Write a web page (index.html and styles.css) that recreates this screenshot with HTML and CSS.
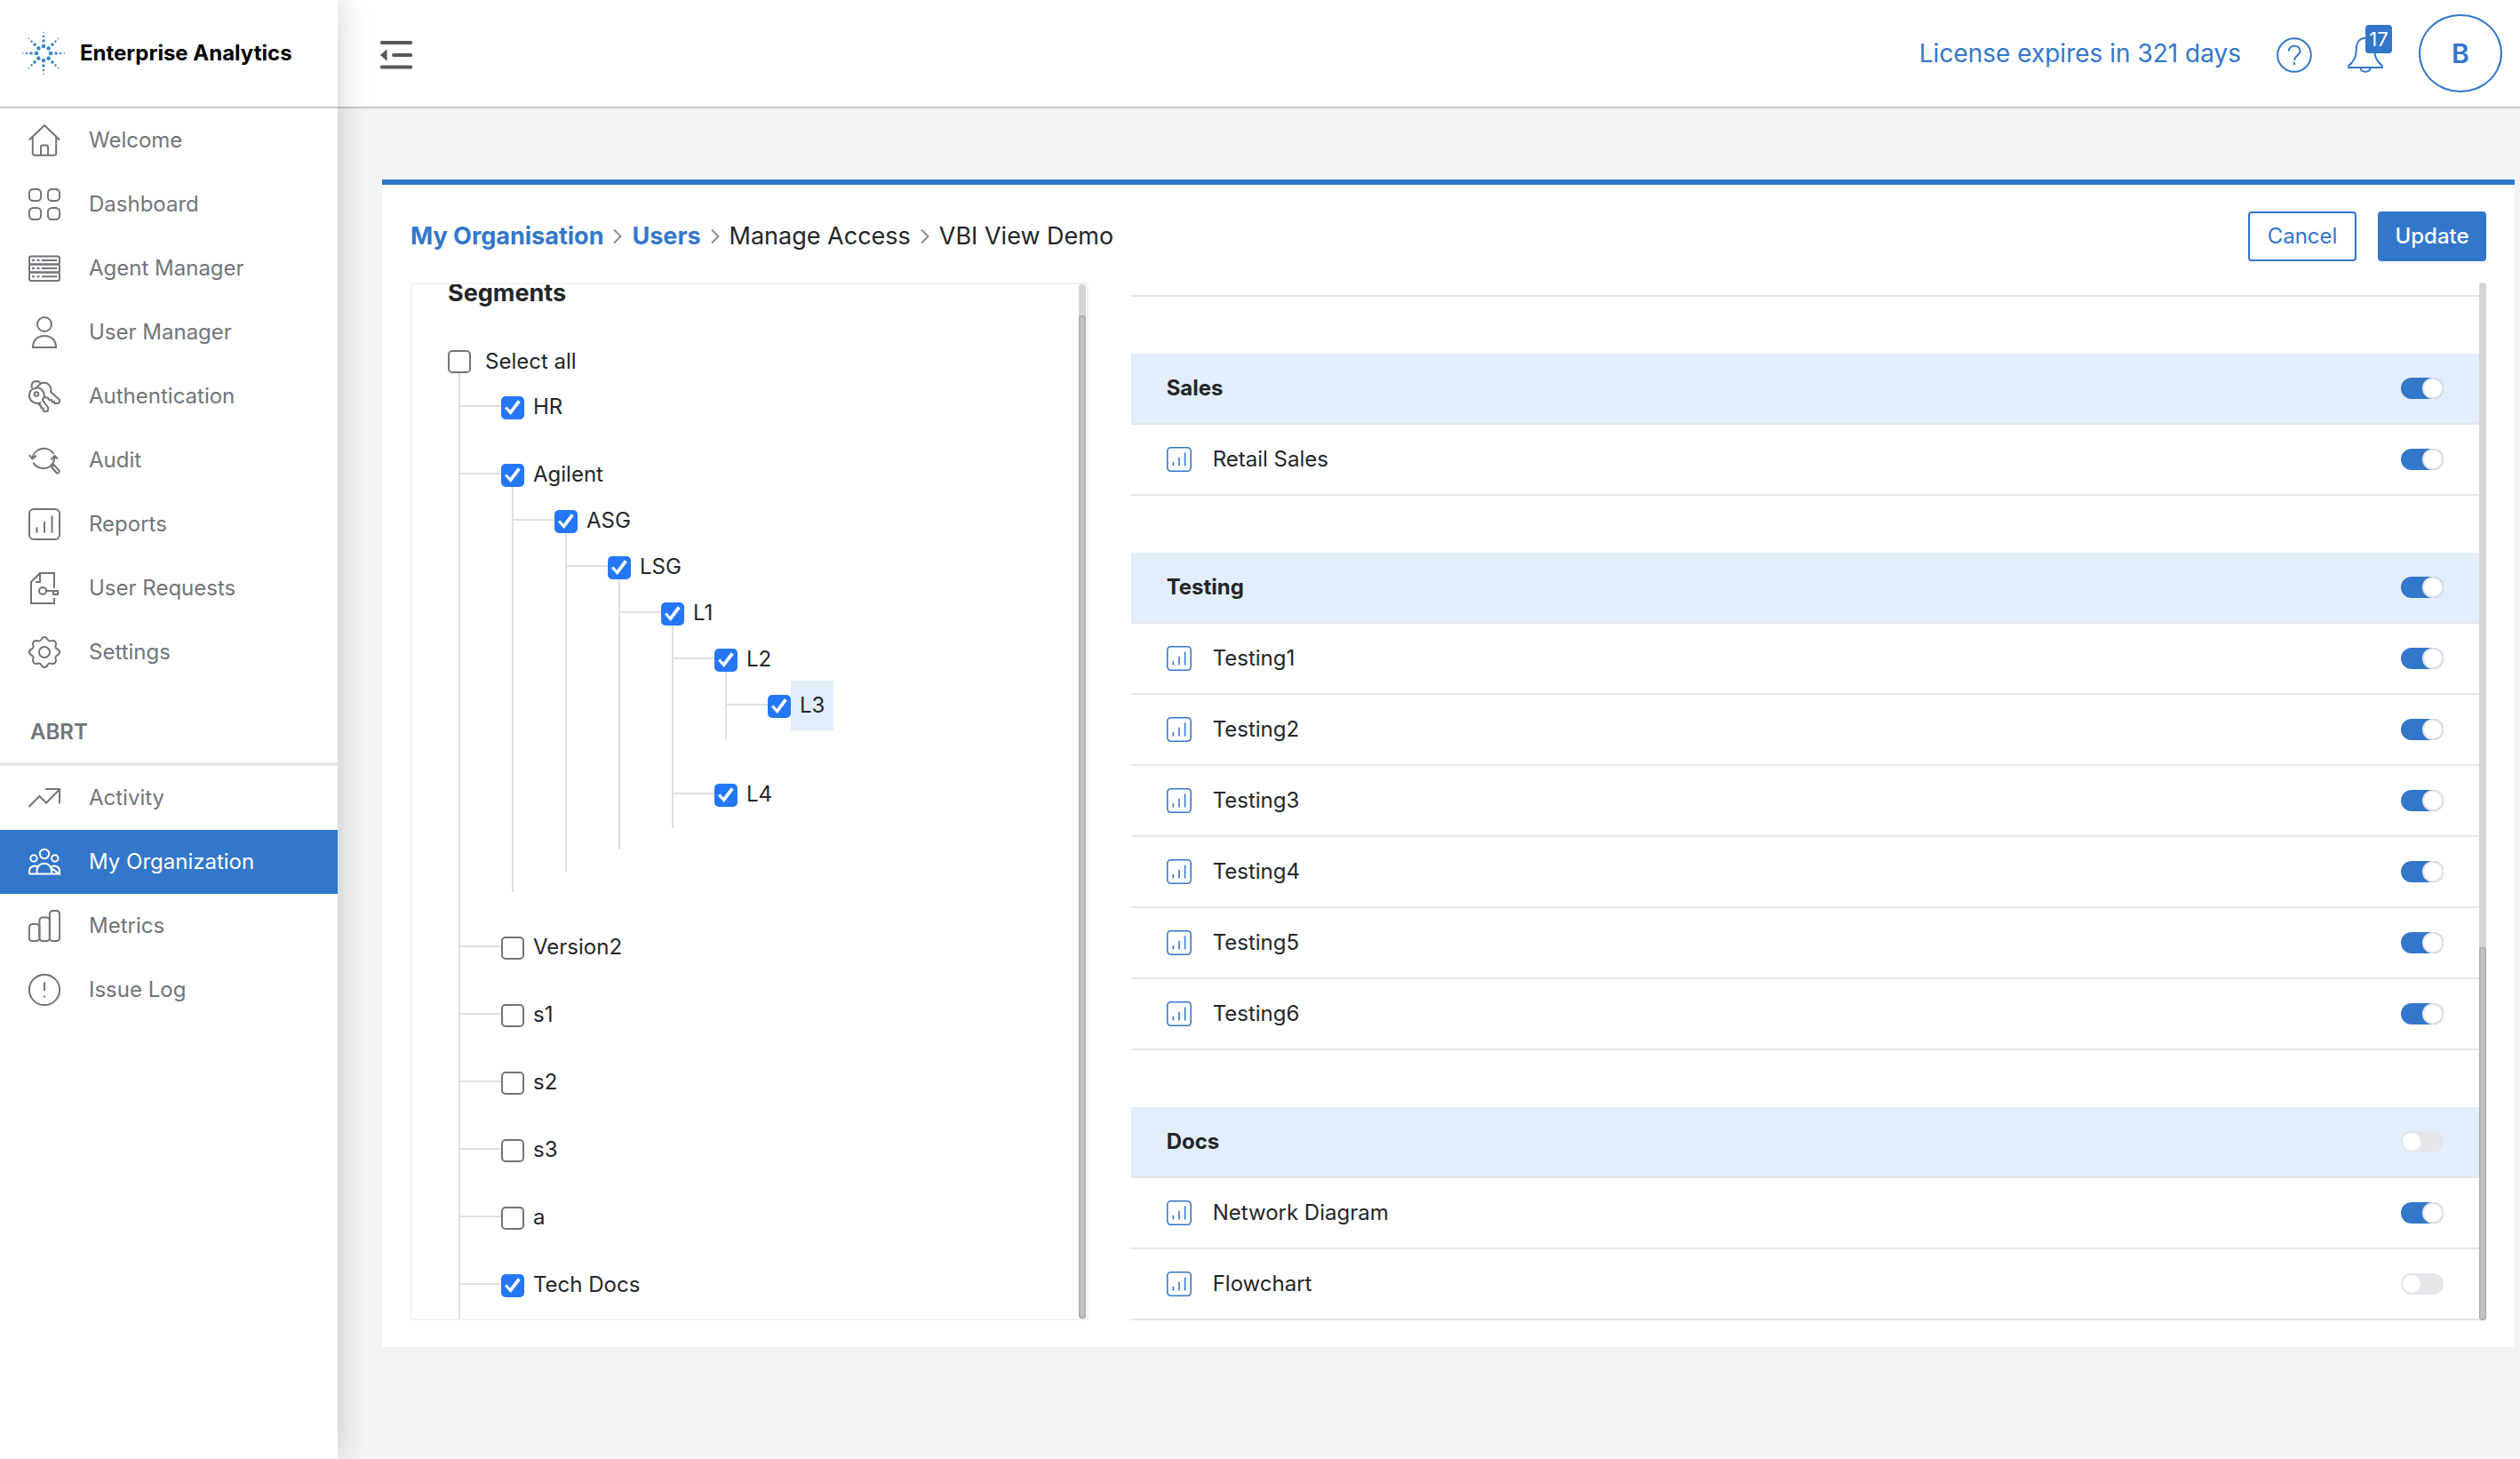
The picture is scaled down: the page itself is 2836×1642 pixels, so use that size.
FILE: index.html
```html
<!DOCTYPE html>
<html lang="en">
<head>
<meta charset="utf-8">
<meta name="viewport" content="width=device-width, initial-scale=1">
<title>Enterprise Analytics</title>
<link rel="stylesheet" href="styles.css">
</head>
<body>
<svg class="sprite" aria-hidden="true">
  <symbol id="chart" viewBox="0 0 36 36">
    <rect x="1" y="1" width="34" height="34" rx="5"/><path d="M9.5 21.500v6M18 15v12.500M26.500 8.500v19"/>
  </symbol>
</svg>
<div class="app">
  <aside class="sidebar">
    <div class="brand">
      <svg class="brand-logo" viewBox="0 0 48 50" aria-hidden="true">
        <defs>
          <g id="ray"><circle cx="24" cy="17" r="2.300"/><circle cx="24" cy="11" r="1.800"/><circle cx="24" cy="6" r="1.300"/><circle cx="24" cy="1.500" r=".8"/></g>
        </defs>
        <use href="#ray"/><use href="#ray" transform="rotate(45 24 25)"/><use href="#ray" transform="rotate(90 24 25)"/><use href="#ray" transform="rotate(135 24 25)"/><use href="#ray" transform="rotate(180 24 25)"/><use href="#ray" transform="rotate(225 24 25)"/><use href="#ray" transform="rotate(270 24 25)"/><use href="#ray" transform="rotate(315 24 25)"/>
      </svg>
      <span class="brand-name">Enterprise Analytics</span>
    </div>
    <nav>
      <a class="nav-item" href="#"><svg class="icon" viewBox="0 0 36 36"><path d="M.8 17.500 18 1l17.200 16.500M4.800 14v18.500a2.200 2.200 0 0 0 2.200 2.200h22a2.200 2.200 0 0 0 2.200-2.200V14M14 34.500v-9a2 2 0 0 1 2-2h4a2 2 0 0 1 2 2v9"/></svg>Welcome</a>
      <a class="nav-item" href="#"><svg class="icon" viewBox="0 0 36 36"><rect x=".9" y=".9" width="13.200" height="13.200" rx="4.500"/><rect x="21.900" y=".9" width="13.200" height="13.200" rx="4.500"/><rect x=".9" y="21.900" width="13.200" height="13.200" rx="4.500"/><rect x="21.900" y="21.900" width="13.200" height="13.200" rx="4.500"/></svg>Dashboard</a>
      <a class="nav-item" href="#"><svg class="icon" viewBox="0 0 36 36"><rect x="1" y="4.500" width="34" height="9" rx="2"/><rect x="1" y="13.500" width="34" height="9" rx="2"/><rect x="1" y="22.500" width="34" height="9.500" rx="2"/><path d="M4 9h3M9.500 9h3M15 9h17M4 18h3M9.500 18h3M15 18h17M4 27.200h3M9.500 27.200h3M15 27.200h17"/></svg>Agent Manager</a>
      <a class="nav-item" href="#"><svg class="icon" viewBox="0 0 36 36"><circle cx="18" cy="9" r="8"/><path d="M5 35c0-8 5-13 13-13s13 5 13 13z"/></svg>User Manager</a>
      <a class="nav-item" href="#"><svg class="icon" viewBox="0 0 36 36"><circle cx="9" cy="15.500" r="2.300"/><path d="M4 9C2.500 5 4.500 1 9 1c2.500 0 4 1.200 5 2.800M7.500 9.500 14 3.500c6-2.500 11 1.500 11.500 7-.2 1.500-.5 2.500-.5 2.500l10 9v2l-1.500 2h-4l-.5-2-2 .5-1-2.500-2.500.2-1.500-2.200-4-1"/><path d="M13 25.500c-5.500 2-12-2-12-8.500 0-9 12-11.500 16-3.500 1.600 3.500 0 7-1.200 8.500l6.500 9-.5 3.500-3.300 1-2-1.500.3-2.500-2.500-.5-.2-2.500-2-.8z"/></svg>Authentication</a>
      <a class="nav-item" href="#"><svg class="icon" viewBox="0 0 36 36"><path d="M28.500 11A13 13 0 0 0 4.500 16M1 12l3.500 4.500L9 12.500M5.500 20.500c4 8 16 9 21.500 1.500 1.500-2 2.500-4.500 2.500-8M25.500 17.500l4-4.500 3.500 3.500M26 25.500l2.500-2.500 6 6.500c1 2-1.500 4-3 2.500z"/></svg>Audit</a>
      <a class="nav-item" href="#"><svg class="icon"><use href="#chart"/></svg>Reports</a>
      <a class="nav-item" href="#"><svg class="icon" viewBox="0 0 36 36"><path d="M29 18V1H13L3 11v24h26v-6M13 1v10H8"/><circle cx="16" cy="21" r="4"/><path d="M20 21h8M28 21h5v4h-5z"/></svg>User Requests</a>
      <a class="nav-item" href="#"><svg class="icon" viewBox="0 0 36 36"><circle cx="18" cy="18" r="6"/><path d="M14.500 3.500c1.500-3.300 5.500-3.300 7 0 .8 2 2.500 2.500 4.300 1.700 3.300-1.200 6.200 1.700 5 5-.8 1.800-.3 3.500 1.700 4.300 3.300 1.500 3.300 5.500 0 7-2 .8-2.500 2.500-1.700 4.300 1.200 3.300-1.700 6.200-5 5-1.800-.8-3.500-.3-4.300 1.700-1.500 3.300-5.500 3.300-7 0-.8-2-2.500-2.500-4.300-1.700-3.300 1.200-6.200-1.700-5-5 .8-1.800.3-3.500-1.700-4.300-3.300-1.500-3.300-5.500 0-7 2-.8 2.500-2.500 1.700-4.300-1.200-3.300 1.700-6.200 5-5 1.800.8 3.500.3 4.300-1.700z"/></svg>Settings</a>
      <h2 class="nav-heading">ABRT</h2>
      <a class="nav-item" href="#"><svg class="icon" viewBox="0 0 36 36"><path d="M.5 28 12.500 16l7.500 7.500L35 8.500M19 8h16v16.500"/></svg>Activity</a>
      <a class="nav-item nav-item--active" href="#" aria-current="page"><svg class="icon" viewBox="0 0 36 36"><circle cx="18" cy="9" r="5.200"/><circle cx="6" cy="14" r="3.700"/><circle cx="29.800" cy="14" r="3.700"/><path d="M1 31.500v-3c0-6 7-7.500 10.500-4M25 24.500c3.500-3.500 10-2 10 4v3zM9.500 31.500V28c0-11 16.500-11 16.500 0v3.500M1 31.500h34"/></svg>My Organization</a>
      <a class="nav-item" href="#"><svg class="icon" viewBox="0 0 36 36"><rect x=".9" y="16" width="11.500" height="19" rx="3.500"/><rect x="12.400" y="8.500" width="11.500" height="26.500" rx="3.500"/><rect x="23.900" y="1" width="11.200" height="34" rx="3.500"/></svg>Metrics</a>
      <a class="nav-item" href="#"><svg class="icon" viewBox="0 0 36 36"><circle cx="18" cy="18" r="17.100"/><path d="M18 9.500v9.500M18 24.500v2"/></svg>Issue Log</a>
    </nav>
  </aside>

  <div class="page">
    <header class="topbar">
      <button class="icon-button" type="button" aria-label="Collapse menu">
        <svg class="icon-menu" viewBox="0 0 36 32"><path d="M1.800 2h32.400M15 16h19.200M1.800 29.500h32.400"/><path class="solid" d="M0 16 7.500 9.200v13.600z"/></svg>
      </button>
      <div class="topbar-tools">
        <a class="license" href="#">License expires in 321 days</a>
        <button class="icon-button" type="button" aria-label="Help">
          <svg class="icon-tool" viewBox="0 0 40 40"><circle cx="20" cy="20" r="18.800"/><path d="M13.800 15.500c0-8 12.800-7.500 12.800-.3 0 5-6.400 5.300-6.400 10.800"/><path d="M20.100 28v3"/></svg>
        </button>
        <button class="icon-button bell" type="button" aria-label="Notifications">
          <svg class="icon-tool" viewBox="0 0 40 40"><path d="M20 .8c-6 0-9.800 4.200-10 10C9.800 23 7 27 1.200 32v2h37.600v-2C33 27 30.200 23 30 10.800 29.800 5 26 .8 20 .8z"/><path d="M14.500 34.500c.5 5.500 10.500 5.500 11 0"/></svg>
          <span class="badge">17</span>
        </button>
        <button class="avatar" type="button" aria-label="Account">B</button>
      </div>
    </header>

    <main class="card">
      <div class="card-head">
        <nav class="crumbs" aria-label="Breadcrumb">
          <a href="#">My Organisation</a>
          <svg class="chevron" viewBox="0 0 10 18"><path d="M1 1.500 8.500 9 1 16.500"/></svg>
          <a href="#">Users</a>
          <svg class="chevron" viewBox="0 0 10 18"><path d="M1 1.500 8.500 9 1 16.500"/></svg>
          <span>Manage Access</span>
          <svg class="chevron" viewBox="0 0 10 18"><path d="M1 1.500 8.500 9 1 16.500"/></svg>
          <span>VBI View Demo</span>
        </nav>
        <div class="actions">
          <button class="button" type="button">Cancel</button>
          <button class="button button--primary" type="button">Update</button>
        </div>
      </div>

      <div class="panels">
        <section class="segments">
          <div class="segments-body">
            <h1 class="segments-title">Segments</h1>
            <label class="select-all"><input class="check" type="checkbox">Select all</label>
            <ul class="tree">
              <li><label class="node"><input class="check" type="checkbox" checked><span class="node-text">HR</span></label></li>
              <li><label class="node"><input class="check" type="checkbox" checked><span class="node-text">Agilent</span></label>
                <ul>
                  <li><label class="node"><input class="check" type="checkbox" checked><span class="node-text">ASG</span></label>
                    <ul>
                      <li><label class="node"><input class="check" type="checkbox" checked><span class="node-text">LSG</span></label>
                        <ul>
                          <li><label class="node"><input class="check" type="checkbox" checked><span class="node-text">L1</span></label>
                            <ul>
                              <li><label class="node"><input class="check" type="checkbox" checked><span class="node-text">L2</span></label>
                                <ul>
                                  <li><label class="node"><input class="check" type="checkbox" checked><span class="node-text node-text--current">L3</span></label></li>
                                </ul>
                              </li>
                              <li><label class="node"><input class="check" type="checkbox" checked><span class="node-text">L4</span></label></li>
                            </ul>
                          </li>
                        </ul>
                      </li>
                    </ul>
                  </li>
                </ul>
              </li>
              <li><label class="node"><input class="check" type="checkbox"><span class="node-text">Version2</span></label></li>
              <li><label class="node"><input class="check" type="checkbox"><span class="node-text">s1</span></label></li>
              <li><label class="node"><input class="check" type="checkbox"><span class="node-text">s2</span></label></li>
              <li><label class="node"><input class="check" type="checkbox"><span class="node-text">s3</span></label></li>
              <li><label class="node"><input class="check" type="checkbox"><span class="node-text">a</span></label></li>
              <li><label class="node"><input class="check" type="checkbox" checked><span class="node-text">Tech Docs</span></label></li>
            </ul>
          </div>
          <div class="scrollbar"><div class="thumb thumb--segments"></div></div>
        </section>

        <section class="reports">
          <div class="reports-body">
            <div class="group-end"></div>
            <div class="group">
              <label class="row row--head"><span class="row-text">Sales</span><input class="toggle" type="checkbox" role="switch" checked></label>
              <label class="row"><svg class="row-icon"><use href="#chart"/></svg><span class="row-text">Retail Sales</span><input class="toggle" type="checkbox" role="switch" checked></label>
            </div>
            <div class="group">
              <label class="row row--head"><span class="row-text">Testing</span><input class="toggle" type="checkbox" role="switch" checked></label>
              <label class="row"><svg class="row-icon"><use href="#chart"/></svg><span class="row-text">Testing1</span><input class="toggle" type="checkbox" role="switch" checked></label>
              <label class="row"><svg class="row-icon"><use href="#chart"/></svg><span class="row-text">Testing2</span><input class="toggle" type="checkbox" role="switch" checked></label>
              <label class="row"><svg class="row-icon"><use href="#chart"/></svg><span class="row-text">Testing3</span><input class="toggle" type="checkbox" role="switch" checked></label>
              <label class="row"><svg class="row-icon"><use href="#chart"/></svg><span class="row-text">Testing4</span><input class="toggle" type="checkbox" role="switch" checked></label>
              <label class="row"><svg class="row-icon"><use href="#chart"/></svg><span class="row-text">Testing5</span><input class="toggle" type="checkbox" role="switch" checked></label>
              <label class="row"><svg class="row-icon"><use href="#chart"/></svg><span class="row-text">Testing6</span><input class="toggle" type="checkbox" role="switch" checked></label>
            </div>
            <div class="group">
              <label class="row row--head"><span class="row-text">Docs</span><input class="toggle" type="checkbox" role="switch"></label>
              <label class="row"><svg class="row-icon"><use href="#chart"/></svg><span class="row-text">Network Diagram</span><input class="toggle" type="checkbox" role="switch" checked></label>
              <label class="row"><svg class="row-icon"><use href="#chart"/></svg><span class="row-text">Flowchart</span><input class="toggle" type="checkbox" role="switch"></label>
            </div>
          </div>
          <div class="scrollbar"><div class="thumb thumb--reports"></div></div>
        </section>
      </div>
    </main>
  </div>
</div>
</body>
</html>
```
FILE: styles.css
```css
:root {
  --blue: #3377cb;
  --check: #2478f8;
  --tint: #e2eefb;
  --line: #e5e6ea;
  --branch: #dfdfe4;
  --text: #242628;
  --muted: #707579;
}

*, *::before, *::after { box-sizing: border-box; }

body {
  margin: 0;
  background: #f3f4f6;
  color: var(--text);
  font: 24px/32px Inter, "Liberation Sans", sans-serif;
}

a { color: inherit; text-decoration: none; }
button { font: inherit; color: inherit; cursor: pointer; }
ul { list-style: none; margin: 0; padding: 0; }

svg {
  fill: none;
  stroke: currentColor;
  stroke-width: 2;
}

.sprite { display: none; }

.app { display: flex; min-height: 100vh; }

/* Sidebar */
.sidebar {
  flex: none;
  width: 380px;
  background: #fff;
  box-shadow: 0 0 36px rgba(0, 0, 0, .2);
  color: var(--muted);
  z-index: 1;
}

.brand {
  display: flex;
  align-items: center;
  gap: 17px;
  height: 122px;
  padding-left: 25px;
  border-bottom: 2px solid #c9c9ca;
}

.brand-logo { width: 48px; height: 50px; fill: #3d87cb; stroke: none; }
.brand-name { color: #000; font-weight: 700; }

.nav-item {
  display: flex;
  align-items: center;
  gap: 32px;
  height: 72px;
  padding-left: 32px;
}

.nav-item--active { background: var(--blue); color: #fff; }
.icon { width: 36px; height: 36px; }

.nav-heading {
  margin: 0;
  padding: 38px 34px 18px;
  border-bottom: 4px solid var(--line);
  font-size: 24px;
  line-height: 32px;
  font-weight: 600;
}

/* Top bar */
.page { flex: 1; min-width: 0; }

.topbar {
  display: flex;
  align-items: center;
  justify-content: space-between;
  height: 122px;
  padding: 0 20px 0 48px;
  background: #fff;
  border-bottom: 2px solid #c9c9ca;
}

.topbar-tools {
  display: flex;
  align-items: center;
  gap: 40px;
  color: var(--blue);
}

.license { font-size: 28px; }

.icon-button {
  display: flex;
  margin-top: 4px;
  padding: 0;
  border: 0;
  background: none;
}

.icon-menu { width: 36px; height: 32px; color: #58585a; stroke-width: 4; stroke-linecap: round; }
.icon-menu .solid { fill: currentColor; stroke: none; }
.icon-tool { width: 40px; height: 40px; }

.bell { position: relative; }

.badge {
  position: absolute;
  top: -14px;
  left: 20px;
  width: 30px;
  border-radius: 4px;
  background: var(--blue);
  color: #fff;
  font-size: 22px;
  line-height: 32px;
  text-align: center;
}

.avatar {
  width: 94px;
  height: 88px;
  padding: 0;
  border: 2px solid var(--blue);
  border-radius: 50%;
  background: #fff;
  font-size: 30px;
  font-weight: 600;
}

/* Card */
.card {
  margin: 80px 6px 0 50px;
  padding: 30px 32px;
  border-top: 6px solid var(--blue);
  background: #fff;
}

.card-head {
  display: flex;
  align-items: center;
  justify-content: space-between;
  margin-bottom: 24px;
}

.crumbs { display: flex; align-items: center; gap: 11px; font-size: 27px; }
.crumbs a { color: var(--blue); font-weight: 700; }
.chevron { width: 10px; height: 18px; color: #8a8d91; }

.actions { display: flex; gap: 24px; }

.button {
  width: 122px;
  height: 56px;
  padding: 0;
  border: 2px solid var(--blue);
  border-radius: 4px;
  background: #fff;
  color: var(--blue);
}

.button--primary { background: var(--blue); color: #fff; font-weight: 500; }

.panels {
  display: grid;
  grid-template-columns: 1fr 2fr;
  gap: 48px;
}

/* Segment tree */
.segments {
  display: flex;
  overflow: hidden;
  border: 2px solid #f3f3f5;
}

.segments-body { flex: 1; padding-left: 40px; }

.segments-title { margin: 0; font-size: 27px; line-height: 20px; font-weight: 700; }

.select-all {
  display: flex;
  align-items: center;
  gap: 16px;
  height: 26px;
  margin-top: 54px;
}

.check {
  flex: none;
  appearance: none;
  width: 26px;
  height: 26px;
  margin: 0;
  border: 2px solid #757577;
  border-radius: 5px;
  background: #fff;
}

.check:checked { border-color: var(--check); background: var(--check); }

.check:checked::after {
  content: "";
  display: block;
  height: 22px;
  background: #fff;
  clip-path: polygon(9% 52%, 20% 43%, 37% 62%, 76% 10%, 90% 20%, 40% 86%);
}

.tree { margin-left: 12px; }
.tree, .tree ul { border-left: 2px solid var(--branch); }
.tree ul { margin-left: 58px; }
.tree li { padding: 26px 0 24px; }

.node { display: flex; height: 26px; }

.node::before {
  content: "";
  width: 46px;
  height: 2px;
  margin-top: 10px;
  background: var(--branch);
}

.node-text {
  margin: -16px 0;
  padding: 16px 10px;
  height: 56px;
  line-height: 24px;
}

.node-text--current { background: var(--tint); }

/* Scrollbars */
.scrollbar {
  display: flex;
  flex: none;
  flex-direction: column;
  justify-content: flex-end;
  width: 8px;
  border-radius: 4px;
  background: #d5d5d5;
}

.segments .scrollbar { margin-right: 1px; }

.thumb {
  border-radius: 4px;
  background: #c4c4c4;
  box-shadow: inset 0 0 3px #7d7d7d;
}

.thumb--segments { height: 97%; }
.thumb--reports { height: 36%; }

/* Report access */
.reports { display: flex; }
.reports-body { flex: 1; }
.group-end { height: 16px; border-bottom: 2px solid var(--line); }
.group { margin-top: 64px; }

.row {
  display: flex;
  align-items: center;
  gap: 24px;
  height: 80px;
  padding: 0 40px;
  border-bottom: 2px solid var(--line);
}

.row--head { background: var(--tint); font-weight: 700; }
.row-icon { width: 28px; height: 28px; color: var(--blue); }
.row-text { flex: 1; }

.toggle {
  appearance: none;
  width: 48px;
  height: 24px;
  margin: 0;
  border-radius: 12px;
  background: var(--line);
}

.toggle::after {
  content: "";
  display: block;
  width: 24px;
  height: 24px;
  border: 2px solid var(--line);
  border-radius: 50%;
  background: #fff;
}

.toggle:checked { background: var(--blue); }
.toggle:checked::after { margin-left: auto; }
```
